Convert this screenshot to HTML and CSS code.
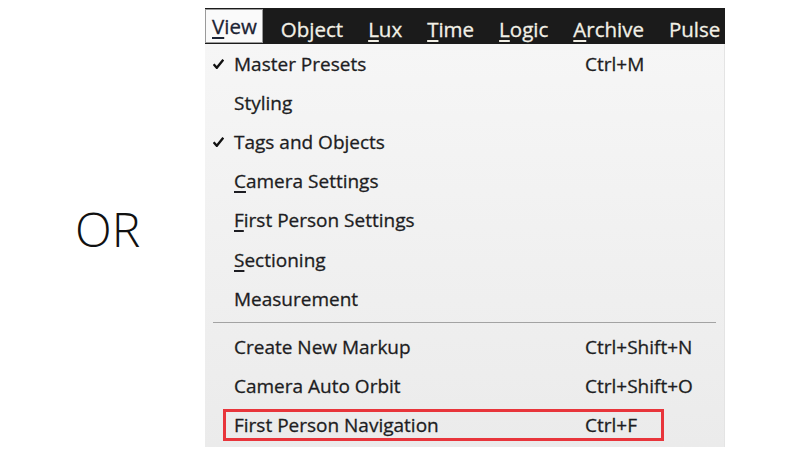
FILE: index.html
```html
<!DOCTYPE html>
<html>
<head>
<meta charset="utf-8">
<link rel="stylesheet" href="styles.css">
</head>
<body>
<div class="page">
  <div class="left"><span class="or">OR</span></div>
  <div class="menu">
    <div class="bar">
      <span class="tab active"><u>V</u>iew</span>
      <span class="tab">Object</span>
      <span class="tab"><u>L</u>ux</span>
      <span class="tab"><u>T</u>ime</span>
      <span class="tab"><u>L</u>ogic</span>
      <span class="tab"><u>A</u>rchive</span>
      <span class="tab">Pulse</span>
    </div>
    <div class="drop">
      <div class="item"><span class="chk"><svg width="11" height="10" viewBox="0 0 11 10"><path d="M0.6 5.2 L3.8 8.8 L10.3 0.8" fill="none" stroke="#111" stroke-width="2.4"/></svg></span><span class="label">Master Presets</span><span class="key">Ctrl+M</span></div>
      <div class="item"><span class="chk"></span><span class="label">Styling</span></div>
      <div class="item"><span class="chk"><svg width="11" height="10" viewBox="0 0 11 10"><path d="M0.6 5.2 L3.8 8.8 L10.3 0.8" fill="none" stroke="#111" stroke-width="2.4"/></svg></span><span class="label">Tags and Objects</span></div>
      <div class="item"><span class="chk"></span><span class="label"><u>C</u>amera Settings</span></div>
      <div class="item"><span class="chk"></span><span class="label"><u>F</u>irst Person Settings</span></div>
      <div class="item"><span class="chk"></span><span class="label"><u>S</u>ectioning</span></div>
      <div class="item"><span class="chk"></span><span class="label">Measurement</span></div>
      <div class="sep"></div>
      <div class="item"><span class="chk"></span><span class="label">Create New Markup</span><span class="key">Ctrl+Shift+N</span></div>
      <div class="item"><span class="chk"></span><span class="label">Camera Auto Orbit</span><span class="key">Ctrl+Shift+O</span></div>
      <div class="item hl">
        <div class="box"><span class="label">First Person Navigation</span><span class="key">Ctrl+F</span></div>
      </div>
    </div>
  </div>
</div>
</body>
</html>
```
FILE: styles.css
```css
html, body {
  margin: 0;
  padding: 0;
  background: #ffffff;
}
.page {
  width: 800px;
  height: 457px;
  display: flex;
  padding-top: 8px;
  box-sizing: border-box;
  font-family: "Open Sans", "Noto Sans", sans-serif;
}
.left {
  width: 205px;
  display: flex;
  align-items: center;
  padding-bottom: 8px;
}
.or {
  font-weight: 300;
  font-size: 48px;
  color: #111;
  margin-left: 75px;
}
.menu {
  width: 520px;
  display: flex;
  flex-direction: column;
}
.bar {
  height: 36px;
  background: #1b1b1b;
  display: flex;
  align-items: center;
  overflow: hidden;
  white-space: nowrap;
  color: #f2f0e6;
  font-size: 20.5px;
  -webkit-text-stroke: 0.3px #f2f0e6;
}
.tab {
  flex-shrink: 0;
  padding: 0 11px;
  margin-right: 3px;
  line-height: 34px;
  padding-top: 3px;
  height: 34px;
  box-sizing: border-box;
}
.tab u, .label u {
  text-decoration-thickness: 1.5px;
  text-underline-offset: 3px;
}
.tab.active {
  background: #fafafa;
  color: #1c2333;
  -webkit-text-stroke: 0.3px #1c2333;
  border: 1px solid #9a9a9a;
  height: 34px;
  line-height: 30px;
  padding: 1px 5px 0 6px;
  margin-right: 7px;
}
.drop {
  height: 403px;
  background: linear-gradient(#f6f6f6, #ebebeb);
  box-sizing: border-box;
  border-right: 1px solid #e4e4e4;
  display: flex;
  flex-direction: column;
  color: #1d1d22;
  font-size: 19px;
  -webkit-text-stroke: 0.3px #1d1d22;
}
.item {
  height: 39.2px;
  display: flex;
  align-items: center;
  flex-shrink: 0;
}
.chk {
  width: 29px;
  padding-left: 8px;
  box-sizing: border-box;
  display: flex;
  align-items: center;
}
.label {
  width: 351px;
  white-space: nowrap;
}
.key {
  white-space: nowrap;
}
.sep {
  height: 1px;
  background: #a3a3a3;
  margin: 4px 8px 4px 8px;
  flex-shrink: 0;
}
.hl {
  padding-left: 18px;
}
.box {
  width: 441px;
  height: 32px;
  box-sizing: border-box;
  border: 3px solid #e8353b;
  display: flex;
  align-items: center;
  padding-left: 8px;
}
.box .label {
  width: 351px;
}
```
